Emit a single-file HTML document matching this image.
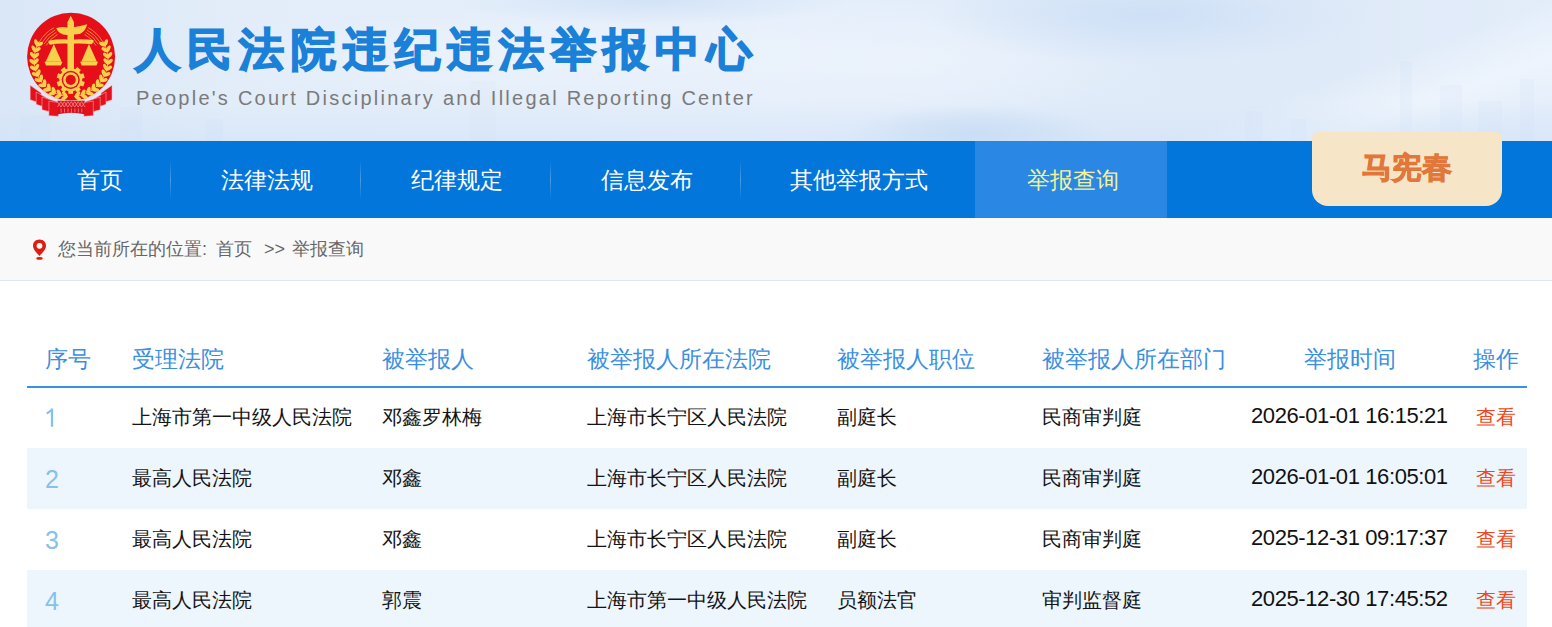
<!DOCTYPE html>
<html><head><meta charset="utf-8">
<style>
*{margin:0;padding:0;box-sizing:border-box}
html,body{width:1552px;height:627px;overflow:hidden;background:#fff;font-family:"Liberation Sans",sans-serif}
.hdr{position:absolute;left:0;top:0;width:1552px;height:141px;overflow:hidden;
background:
radial-gradient(ellipse 130px 30px at 975px 135px,rgba(196,218,244,.9),rgba(196,218,244,0)),
radial-gradient(ellipse 220px 50px at 1150px 15px,rgba(204,223,246,.9),rgba(204,223,246,0)),
radial-gradient(ellipse 200px 25px at 650px 0px,rgba(206,224,246,.8),rgba(206,224,246,0)),
radial-gradient(ellipse 380px 45px at 560px 55px,rgba(236,243,252,.9),rgba(236,243,252,0)),
radial-gradient(ellipse 250px 60px at 900px 60px,rgba(236,243,252,.9),rgba(236,243,252,0)),
linear-gradient(160deg,rgba(255,255,255,0) 80%,rgba(240,246,253,.8) 88%,rgba(255,255,255,0) 96%),
linear-gradient(90deg,#dae7f7 0%,#e2edf9 15%,#e6effb 50%,#e0ebf9 70%,#dfeaf8 85%,#e3edfa 100%)}
.sky{position:absolute;bottom:0;background:rgba(200,220,245,.15)}
.skyband{position:absolute;left:0;bottom:0;width:1552px;height:40px;background:linear-gradient(180deg,rgba(205,224,246,0),rgba(205,224,246,.45))}
.emb{position:absolute;left:22px;top:8px}
.t1{position:absolute;left:135px;top:20px;font-size:45px;font-weight:bold;color:#1b80d8;letter-spacing:7px;white-space:nowrap;line-height:60px;-webkit-text-stroke:1.6px #1b80d8}
.t2{position:absolute;left:136px;top:85px;font-size:20px;color:#7a7a7a;letter-spacing:2.25px;white-space:nowrap;line-height:26px}
.nav{position:absolute;left:0;top:141px;width:1552px;height:77px;background:#0276db}
.nav .it{position:absolute;top:0;height:77px;line-height:79px;color:#fff;font-size:23px;text-align:center;white-space:nowrap}
.nav .sep{position:absolute;top:19px;width:1px;height:40px;background:linear-gradient(180deg,rgba(255,255,255,0),rgba(255,255,255,.28) 50%,rgba(255,255,255,0))}
.nav .act{background:#2a87e4;color:#f3f29a}
.btn{position:absolute;left:1312px;top:132px;width:190px;height:74px;border-radius:6px 6px 16px 16px;background:#f6e6c7;color:#e2773b;font-size:30px;font-weight:bold;text-align:center;line-height:72px;-webkit-text-stroke:0.9px #e2773b}
.bc{position:absolute;left:0;top:218px;width:1552px;height:63px;background:#f9f9f9;border-bottom:1px solid #dde6ee}
.bc .txt{position:absolute;left:58px;top:17px;font-size:18px;color:#666;line-height:28px;white-space:nowrap}
.tbl{position:absolute;left:27px;top:320px;width:1500px;height:307px}
.th{position:absolute;left:0;top:0;height:68px;width:1500px;border-bottom:2px solid #3a91e4}
.th span{position:absolute;top:24px;font-size:22.5px;color:#3b8fe1;line-height:32px;white-space:nowrap}
.row{position:absolute;left:0;width:1500px;height:61px}
.row.alt{background:#edf5fd}
.row span{position:absolute;top:15px;font-size:20px;color:#141414;line-height:30px;white-space:nowrap}
.row span.n{color:#86c1ec;font-size:25px;top:16px}
.row span.d{font-size:22px;letter-spacing:-0.4px;color:#111;top:14px}
.row span.op{color:#ee4721}
</style></head><body>
<div class="hdr">
  <div class="skyband"></div>
  <div class="sky" style="left:20px;width:30px;height:26px"></div>
  <div class="sky" style="left:120px;width:22px;height:34px"></div>
  <div class="sky" style="left:205px;width:18px;height:22px"></div>
  <div class="sky" style="left:470px;width:26px;height:60px;opacity:.5"></div>
  <div class="sky" style="left:1400px;width:12px;height:80px"></div>
  <div class="sky" style="left:1440px;width:22px;height:56px"></div>
  <div class="sky" style="left:1478px;width:24px;height:40px"></div>
  <div class="sky" style="left:1520px;width:14px;height:62px"></div>
  <div class="sky" style="left:1245px;width:18px;height:30px"></div>
  <div class="sky" style="left:1290px;width:16px;height:22px"></div>
  <svg class="emb" viewBox="0 0 550 627" width="100" height="114"><circle cx="270" cy="268" r="242" fill="#e50e19"/><path d="M110 452 A242 242 0 0 0 430 452" fill="none" stroke="#f3d0d4" stroke-width="7"/><polygon points="45,425 105,468 105,525 45,505" fill="#e4101b" stroke="#f6b9bd" stroke-width="3"/><polygon points="495,425 435,468 435,525 495,505" fill="#e4101b" stroke="#f6b9bd" stroke-width="3"/><polygon points="78,462 145,500 145,552 78,530" fill="#e4101b" stroke="#f6b9bd" stroke-width="3"/><polygon points="462,462 395,500 395,552 462,530" fill="#e4101b" stroke="#f6b9bd" stroke-width="3"/><polygon points="110,490 192,515 192,580 110,560" fill="#e4101b" stroke="#f6b9bd" stroke-width="3"/><polygon points="430,490 348,515 348,580 430,560" fill="#e4101b" stroke="#f6b9bd" stroke-width="3"/><polygon points="148,512 200,520 200,596 148,592" fill="#e4101b" stroke="#f6b9bd" stroke-width="3"/><polygon points="392,512 340,520 340,596 392,592" fill="#e4101b" stroke="#f6b9bd" stroke-width="3"/><rect x="195" y="510" width="150" height="45" fill="#e4101b"/><path d="M195 545 Q270 528 345 545 L345 585 Q270 568 195 585 Z" fill="#d80f1a"/><line x1="195" y1="515" x2="214" y2="545" stroke="#f6c0c0" stroke-width="3"/><line x1="214" y1="515" x2="195" y2="545" stroke="#f6c0c0" stroke-width="3"/><line x1="214" y1="515" x2="233" y2="545" stroke="#f6c0c0" stroke-width="3"/><line x1="233" y1="515" x2="214" y2="545" stroke="#f6c0c0" stroke-width="3"/><line x1="233" y1="515" x2="252" y2="545" stroke="#f6c0c0" stroke-width="3"/><line x1="252" y1="515" x2="233" y2="545" stroke="#f6c0c0" stroke-width="3"/><line x1="252" y1="515" x2="271" y2="545" stroke="#f6c0c0" stroke-width="3"/><line x1="271" y1="515" x2="252" y2="545" stroke="#f6c0c0" stroke-width="3"/><line x1="271" y1="515" x2="290" y2="545" stroke="#f6c0c0" stroke-width="3"/><line x1="290" y1="515" x2="271" y2="545" stroke="#f6c0c0" stroke-width="3"/><line x1="290" y1="515" x2="309" y2="545" stroke="#f6c0c0" stroke-width="3"/><line x1="309" y1="515" x2="290" y2="545" stroke="#f6c0c0" stroke-width="3"/><line x1="309" y1="515" x2="328" y2="545" stroke="#f6c0c0" stroke-width="3"/><line x1="328" y1="515" x2="309" y2="545" stroke="#f6c0c0" stroke-width="3"/><line x1="328" y1="515" x2="347" y2="545" stroke="#f6c0c0" stroke-width="3"/><line x1="347" y1="515" x2="328" y2="545" stroke="#f6c0c0" stroke-width="3"/><line x1="215" y1="553" x2="215" y2="575" stroke="#f6c0c0" stroke-width="3"/><line x1="234" y1="553" x2="234" y2="575" stroke="#f6c0c0" stroke-width="3"/><line x1="253" y1="553" x2="253" y2="575" stroke="#f6c0c0" stroke-width="3"/><line x1="272" y1="553" x2="272" y2="575" stroke="#f6c0c0" stroke-width="3"/><line x1="291" y1="553" x2="291" y2="575" stroke="#f6c0c0" stroke-width="3"/><line x1="310" y1="553" x2="310" y2="575" stroke="#f6c0c0" stroke-width="3"/><line x1="329" y1="553" x2="329" y2="575" stroke="#f6c0c0" stroke-width="3"/><ellipse cx="96.9" cy="199.2" rx="20" ry="10" fill="#f8d04b" transform="rotate(-24.0 96.9 199.2)"/><ellipse cx="443.1" cy="199.2" rx="20" ry="10" fill="#f8d04b" transform="rotate(-156.0 443.1 199.2)"/><ellipse cx="78.7" cy="191.1" rx="20" ry="10" fill="#f8d04b" transform="rotate(-108.0 78.7 191.1)"/><ellipse cx="461.3" cy="191.1" rx="20" ry="10" fill="#f8d04b" transform="rotate(-72.0 461.3 191.1)"/><ellipse cx="85.0" cy="229.4" rx="20" ry="10" fill="#f8d04b" transform="rotate(-33.6 85.0 229.4)"/><ellipse cx="455.0" cy="229.4" rx="20" ry="10" fill="#f8d04b" transform="rotate(-146.4 455.0 229.4)"/><ellipse cx="65.6" cy="224.4" rx="20" ry="10" fill="#f8d04b" transform="rotate(-117.6 65.6 224.4)"/><ellipse cx="474.4" cy="224.4" rx="20" ry="10" fill="#f8d04b" transform="rotate(-62.4 474.4 224.4)"/><ellipse cx="78.3" cy="261.1" rx="20" ry="10" fill="#f8d04b" transform="rotate(-43.3 78.3 261.1)"/><ellipse cx="461.7" cy="261.1" rx="20" ry="10" fill="#f8d04b" transform="rotate(-136.7 461.7 261.1)"/><ellipse cx="58.4" cy="259.5" rx="20" ry="10" fill="#f8d04b" transform="rotate(-127.3 58.4 259.5)"/><ellipse cx="481.6" cy="259.5" rx="20" ry="10" fill="#f8d04b" transform="rotate(-52.7 481.6 259.5)"/><ellipse cx="77.0" cy="293.5" rx="20" ry="10" fill="#f8d04b" transform="rotate(-52.9 77.0 293.5)"/><ellipse cx="463.0" cy="293.5" rx="20" ry="10" fill="#f8d04b" transform="rotate(-127.1 463.0 293.5)"/><ellipse cx="57.1" cy="295.3" rx="20" ry="10" fill="#f8d04b" transform="rotate(-136.9 57.1 295.3)"/><ellipse cx="482.9" cy="295.3" rx="20" ry="10" fill="#f8d04b" transform="rotate(-43.1 482.9 295.3)"/><ellipse cx="81.2" cy="325.7" rx="20" ry="10" fill="#f8d04b" transform="rotate(-62.5 81.2 325.7)"/><ellipse cx="458.8" cy="325.7" rx="20" ry="10" fill="#f8d04b" transform="rotate(-117.5 458.8 325.7)"/><ellipse cx="61.8" cy="330.8" rx="20" ry="10" fill="#f8d04b" transform="rotate(-146.5 61.8 330.8)"/><ellipse cx="478.2" cy="330.8" rx="20" ry="10" fill="#f8d04b" transform="rotate(-33.5 478.2 330.8)"/><ellipse cx="90.7" cy="356.8" rx="20" ry="10" fill="#f8d04b" transform="rotate(-72.2 90.7 356.8)"/><ellipse cx="449.3" cy="356.8" rx="20" ry="10" fill="#f8d04b" transform="rotate(-107.8 449.3 356.8)"/><ellipse cx="72.4" cy="365.0" rx="20" ry="10" fill="#f8d04b" transform="rotate(-156.2 72.4 365.0)"/><ellipse cx="467.6" cy="365.0" rx="20" ry="10" fill="#f8d04b" transform="rotate(-23.8 467.6 365.0)"/><ellipse cx="105.2" cy="385.8" rx="20" ry="10" fill="#f8d04b" transform="rotate(-81.8 105.2 385.8)"/><ellipse cx="434.8" cy="385.8" rx="20" ry="10" fill="#f8d04b" transform="rotate(-98.2 434.8 385.8)"/><ellipse cx="88.6" cy="396.9" rx="20" ry="10" fill="#f8d04b" transform="rotate(-165.8 88.6 396.9)"/><ellipse cx="451.4" cy="396.9" rx="20" ry="10" fill="#f8d04b" transform="rotate(-14.2 451.4 396.9)"/><ellipse cx="124.4" cy="411.9" rx="20" ry="10" fill="#f8d04b" transform="rotate(-91.5 124.4 411.9)"/><ellipse cx="415.6" cy="411.9" rx="20" ry="10" fill="#f8d04b" transform="rotate(-88.5 415.6 411.9)"/><ellipse cx="109.9" cy="425.7" rx="20" ry="10" fill="#f8d04b" transform="rotate(-175.5 109.9 425.7)"/><ellipse cx="430.1" cy="425.7" rx="20" ry="10" fill="#f8d04b" transform="rotate(-4.5 430.1 425.7)"/><ellipse cx="147.7" cy="434.5" rx="20" ry="10" fill="#f8d04b" transform="rotate(-101.1 147.7 434.5)"/><ellipse cx="392.3" cy="434.5" rx="20" ry="10" fill="#f8d04b" transform="rotate(-78.9 392.3 434.5)"/><ellipse cx="135.7" cy="450.5" rx="20" ry="10" fill="#f8d04b" transform="rotate(174.9 135.7 450.5)"/><ellipse cx="404.3" cy="450.5" rx="20" ry="10" fill="#f8d04b" transform="rotate(5.1 404.3 450.5)"/><ellipse cx="174.5" cy="452.9" rx="20" ry="10" fill="#f8d04b" transform="rotate(-110.7 174.5 452.9)"/><ellipse cx="365.5" cy="452.9" rx="20" ry="10" fill="#f8d04b" transform="rotate(-69.3 365.5 452.9)"/><ellipse cx="165.3" cy="470.7" rx="20" ry="10" fill="#f8d04b" transform="rotate(165.3 165.3 470.7)"/><ellipse cx="374.7" cy="470.7" rx="20" ry="10" fill="#f8d04b" transform="rotate(14.7 374.7 470.7)"/><ellipse cx="203.9" cy="466.5" rx="20" ry="10" fill="#f8d04b" transform="rotate(-120.4 203.9 466.5)"/><ellipse cx="336.1" cy="466.5" rx="20" ry="10" fill="#f8d04b" transform="rotate(-59.6 336.1 466.5)"/><ellipse cx="197.8" cy="485.6" rx="20" ry="10" fill="#f8d04b" transform="rotate(155.6 197.8 485.6)"/><ellipse cx="342.2" cy="485.6" rx="20" ry="10" fill="#f8d04b" transform="rotate(24.4 342.2 485.6)"/><ellipse cx="235.2" cy="475.0" rx="20" ry="10" fill="#f8d04b" transform="rotate(-130.0 235.2 475.0)"/><ellipse cx="304.8" cy="475.0" rx="20" ry="10" fill="#f8d04b" transform="rotate(-50.0 304.8 475.0)"/><ellipse cx="232.4" cy="494.8" rx="20" ry="10" fill="#f8d04b" transform="rotate(146.0 232.4 494.8)"/><ellipse cx="307.6" cy="494.8" rx="20" ry="10" fill="#f8d04b" transform="rotate(34.0 307.6 494.8)"/><path d="M94.2 183.5 L84.5 202.6 L76.8 222.6 L71.3 243.3 L68.0 264.5 L67.0 285.9 L68.2 307.3 L71.7 328.5 L77.4 349.1 L85.2 369.1 L95.1 388.1 L107.0 406.0 L120.6 422.5 L136.0 437.5 L152.8 450.8 L170.9 462.2 L190.2 471.6 L210.3 479.0 L231.1 484.2 L252.3 487.2" fill="none" stroke="#f8d04b" stroke-width="5"/><path d="M445.8 183.5 L455.5 202.6 L463.2 222.6 L468.7 243.3 L472.0 264.5 L473.0 285.9 L471.8 307.3 L468.3 328.5 L462.6 349.1 L454.8 369.1 L444.9 388.1 L433.0 406.0 L419.4 422.5 L404.0 437.5 L387.2 450.8 L369.1 462.2 L349.8 471.6 L329.7 479.0 L308.9 484.2 L287.7 487.2" fill="none" stroke="#f8d04b" stroke-width="5"/><path d="M96.8 185.0 A200 200 0 0 1 176.1 108.4" fill="none" stroke="#f8d04b" stroke-width="3.5"/><path d="M443.2 185.0 A200 200 0 0 0 363.9 108.4" fill="none" stroke="#f8d04b" stroke-width="3.5"/><path d="M108.9 192.0 A186 186 0 0 1 182.7 120.8" fill="none" stroke="#f8d04b" stroke-width="3.5"/><path d="M431.1 192.0 A186 186 0 0 0 357.3 120.8" fill="none" stroke="#f8d04b" stroke-width="3.5"/><path d="M121.0 199.0 A172 172 0 0 1 189.3 133.1" fill="none" stroke="#f8d04b" stroke-width="3.5"/><path d="M419.0 199.0 A172 172 0 0 0 350.7 133.1" fill="none" stroke="#f8d04b" stroke-width="3.5"/><path d="M133.2 206.0 A158 158 0 0 1 195.8 145.5" fill="none" stroke="#f8d04b" stroke-width="3.5"/><path d="M406.8 206.0 A158 158 0 0 0 344.2 145.5" fill="none" stroke="#f8d04b" stroke-width="3.5"/><polygon points="268,42 286,78 286,335 250,335 250,78" fill="#f8d04b"/><path d="M188 112 Q215 100 255 108 L290 104 Q330 100 358 90 Q352 128 318 143 L255 148 Q205 152 188 112 Z" fill="#f8d04b"/><path d="M146 180 Q205 168 268 174 Q335 168 394 176 Q392 190 385 200 Q330 192 268 196 Q205 192 152 202 Q146 192 146 180 Z" fill="#f8d04b"/><polygon points="175,198 130,296 218,296" fill="#f8d04b"/><path d="M124 296 L222 296 L214 316 L132 316 Z" fill="#f8d04b"/><polygon points="368,198 326,296 412,296" fill="#f8d04b"/><path d="M320 296 L418 296 L410 316 L328 316 Z" fill="#f8d04b"/><rect x="255" y="318" width="26" height="30" fill="#f8d04b" transform="rotate(0.0 268 395)"/><rect x="255" y="318" width="26" height="30" fill="#f8d04b" transform="rotate(36.0 268 395)"/><rect x="255" y="318" width="26" height="30" fill="#f8d04b" transform="rotate(72.0 268 395)"/><rect x="255" y="318" width="26" height="30" fill="#f8d04b" transform="rotate(108.0 268 395)"/><rect x="255" y="318" width="26" height="30" fill="#f8d04b" transform="rotate(144.0 268 395)"/><rect x="255" y="318" width="26" height="30" fill="#f8d04b" transform="rotate(180.0 268 395)"/><rect x="255" y="318" width="26" height="30" fill="#f8d04b" transform="rotate(216.0 268 395)"/><rect x="255" y="318" width="26" height="30" fill="#f8d04b" transform="rotate(252.0 268 395)"/><rect x="255" y="318" width="26" height="30" fill="#f8d04b" transform="rotate(288.0 268 395)"/><rect x="255" y="318" width="26" height="30" fill="#f8d04b" transform="rotate(324.0 268 395)"/><circle cx="268" cy="395" r="63" fill="#f8d04b"/><circle cx="268" cy="395" r="50" fill="#e50e19"/><circle cx="268" cy="395" r="42" fill="#f8d04b"/><circle cx="268" cy="395" r="28" fill="#e50e19"/></svg>
  <div class="t1">人民法院违纪违法举报中心</div>
  <div class="t2">People's Court Disciplinary and Illegal Reporting Center</div>
</div>
<div class="nav">
  <div class="it" style="left:30px;width:140px">首页</div>
  <div class="sep" style="left:170px"></div>
  <div class="it" style="left:172px;width:189px">法律法规</div>
  <div class="sep" style="left:360px"></div>
  <div class="it" style="left:362px;width:189px">纪律规定</div>
  <div class="sep" style="left:550px"></div>
  <div class="it" style="left:552px;width:189px">信息发布</div>
  <div class="sep" style="left:740px"></div>
  <div class="it" style="left:742px;width:233px">其他举报方式</div>
  <div class="it act" style="left:975px;width:192px;text-indent:3px">举报查询</div>
</div>
<div class="btn">马宪春</div>
<div class="bc">
  <svg style="position:absolute;left:32px;top:21px" width="15" height="21" viewBox="0 0 15 21"><path d="M7.5 0.5C3.6 0.5 1 3.3 1 6.8 1 10.6 5 14.2 7.5 17 10 14.2 14 10.6 14 6.8 14 3.3 11.4 0.5 7.5 0.5Z" fill="#de1c10"/><circle cx="7.5" cy="6.8" r="2.9" fill="#fff"/><ellipse cx="7.5" cy="19.4" rx="3.2" ry="1.4" fill="#de1c10"/></svg>
  <div class="txt" style="left:58px">您当前所在的位置</div><div class="txt" style="left:202px">:</div><div class="txt" style="left:216px">首页</div><div class="txt" style="left:264px">&gt;&gt;</div><div class="txt" style="left:292px">举报查询</div>
</div>
<div class="tbl">
  <div class="th">
    <span style="left:18px">序号</span>
    <span style="left:105px">受理法院</span>
    <span style="left:355px">被举报人</span>
    <span style="left:560px">被举报人所在法院</span>
    <span style="left:810px">被举报人职位</span>
    <span style="left:1015px">被举报人所在部门</span>
    <span style="left:1277px">举报时间</span>
    <span style="left:1446px">操作</span>
  </div>
  <div class="row" style="top:67px">
    <svg style="position:absolute;left:17px;top:20px" width="12" height="22"><path d="M8 1.6 V19.8" stroke="#86c1ec" stroke-width="2.3" fill="none"/><path d="M2.7 6.6 L8.6 2.4" stroke="#86c1ec" stroke-width="2" fill="none"/></svg>
    <span style="left:105px">上海市第一中级人民法院</span>
    <span style="left:355px">邓鑫罗林梅</span>
    <span style="left:560px">上海市长宁区人民法院</span>
    <span style="left:810px">副庭长</span>
    <span style="left:1015px">民商审判庭</span>
    <span class="d" style="left:1224px">2026-01-01 16:15:21</span>
    <span class="op" style="left:1449px">查看</span>
  </div>
  <div class="row alt" style="top:128px">
    <span class="n" style="left:18px">2</span>
    <span style="left:105px">最高人民法院</span>
    <span style="left:355px">邓鑫</span>
    <span style="left:560px">上海市长宁区人民法院</span>
    <span style="left:810px">副庭长</span>
    <span style="left:1015px">民商审判庭</span>
    <span class="d" style="left:1224px">2026-01-01 16:05:01</span>
    <span class="op" style="left:1449px">查看</span>
  </div>
  <div class="row" style="top:189px">
    <span class="n" style="left:18px">3</span>
    <span style="left:105px">最高人民法院</span>
    <span style="left:355px">邓鑫</span>
    <span style="left:560px">上海市长宁区人民法院</span>
    <span style="left:810px">副庭长</span>
    <span style="left:1015px">民商审判庭</span>
    <span class="d" style="left:1224px">2025-12-31 09:17:37</span>
    <span class="op" style="left:1449px">查看</span>
  </div>
  <div class="row alt" style="top:250px">
    <span class="n" style="left:18px">4</span>
    <span style="left:105px">最高人民法院</span>
    <span style="left:355px">郭震</span>
    <span style="left:560px">上海市第一中级人民法院</span>
    <span style="left:810px">员额法官</span>
    <span style="left:1015px">审判监督庭</span>
    <span class="d" style="left:1224px">2025-12-30 17:45:52</span>
    <span class="op" style="left:1449px">查看</span>
  </div>
</div>
</body></html>
